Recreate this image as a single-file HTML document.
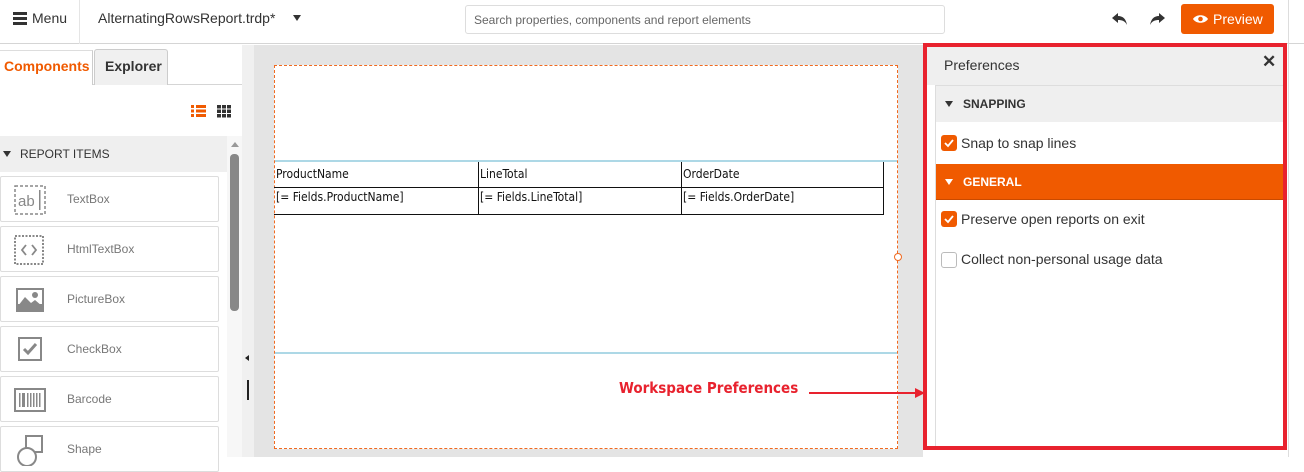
<!DOCTYPE html>
<html><head><style>
*{box-sizing:border-box;margin:0;padding:0}
body{width:1304px;height:457px;overflow:hidden;background:#fff;font-family:"Liberation Sans",sans-serif;position:relative;color:#333}
.a{position:absolute}
.item{position:absolute;left:0;width:219px;height:46px;border:1px solid #ddd;border-radius:2px;background:#fff}
.item span{position:absolute;left:66px;top:15px;font-size:12px;color:#777}
.item svg{position:absolute;left:12px;top:7px}
.cell{position:absolute;font-family:"DejaVu Sans Condensed","Liberation Sans Narrow",sans-serif;font-size:12px;color:#111;padding-left:2px}
.cb{position:absolute;width:16px;height:16px;border-radius:3px;background:#f05a00}
.cb.off{background:#fff;border:1px solid #bbb}
.lbl{position:absolute;font-size:14px;color:#333}
</style></head><body>
<!-- top bar -->
<div class="a" style="left:0;top:0;width:1304px;height:44px;border-bottom:1px solid #d5d5d5;background:#fff"></div>
<div class="a" style="left:13px;top:12px;width:14px;height:3px;background:#333;box-shadow:0 5px 0 #333,0 10px 0 #333"></div>
<div class="a" style="left:32px;top:10px;font-size:14px;color:#333">Menu</div>
<div class="a" style="left:79px;top:0;width:1px;height:44px;background:#e5e5e5"></div>
<div class="a" style="left:98px;top:10px;font-size:14px;color:#333">AlternatingRowsReport.trdp*</div>
<div class="a" style="left:293px;top:15px;width:0;height:0;border-left:4px solid transparent;border-right:4px solid transparent;border-top:6px solid #333"></div>
<div class="a" style="left:465px;top:5px;width:480px;height:29px;border:1px solid #ddd;border-radius:3px;font-size:12px;color:#666;padding:7px 8px">Search properties, components and report elements</div>
<svg class="a" style="left:1112px;top:12px" width="16" height="14" viewBox="0 0 16 14"><path d="M6 1 L0 6 L6 11 V8 C10 8 13 9 15 13 C14 7 11 4 6 4 Z" fill="#333"/></svg>
<svg class="a" style="left:1149px;top:12px" width="16" height="14" viewBox="0 0 16 14"><path d="M10 1 L16 6 L10 11 V8 C6 8 3 9 1 13 C2 7 5 4 10 4 Z" fill="#333"/></svg>
<div class="a" style="left:1181px;top:4px;width:93px;height:30px;background:#f05a00;border-radius:3px;color:#fff;font-size:14px;padding:7px 0 0 32px">Preview</div>
<svg class="a" style="left:1193px;top:14px" width="15" height="10" viewBox="0 0 15 10"><path d="M0 5 C3 0 12 0 15 5 C12 10 3 10 0 5Z" fill="#fff"/><circle cx="7.5" cy="5" r="2.3" fill="#f05a00"/></svg>
<div class="a" style="left:1288px;top:0;width:1px;height:457px;background:#ddd"></div>

<!-- left panel -->
<div class="a" style="left:0;top:84px;width:242px;height:1px;background:#d5d5d5"></div>
<div class="a" style="left:0;top:50px;width:93px;height:35px;background:#fff;border-right:1px solid #ccc;border-top:1px solid #ddd"></div>
<div class="a" style="left:4px;top:58px;font-size:14px;color:#f05a00;font-weight:bold">Components</div>
<div class="a" style="left:94px;top:49px;width:74px;height:36px;background:#f0f0f0;border:1px solid #ccc;border-bottom:none;border-radius:3px 3px 0 0"></div>
<div class="a" style="left:105px;top:58px;font-size:14px;color:#333;font-weight:bold">Explorer</div>
<svg class="a" style="left:191px;top:105px" width="15" height="12"><rect x="0" y="0" width="3" height="3" fill="#f05a00"/><rect x="5" y="0" width="10" height="3" fill="#f05a00"/><rect x="0" y="4.5" width="3" height="3" fill="#f05a00"/><rect x="5" y="4.5" width="10" height="3" fill="#f05a00"/><rect x="0" y="9" width="3" height="3" fill="#f05a00"/><rect x="5" y="9" width="10" height="3" fill="#f05a00"/></svg>
<svg class="a" style="left:217px;top:105px" width="14" height="13"><g fill="#333"><rect x="0" y="0" width="4" height="3.5"/><rect x="5" y="0" width="4" height="3.5"/><rect x="10" y="0" width="4" height="3.5"/><rect x="0" y="4.5" width="4" height="3.5"/><rect x="5" y="4.5" width="4" height="3.5"/><rect x="10" y="4.5" width="4" height="3.5"/><rect x="0" y="9" width="4" height="3.5"/><rect x="5" y="9" width="4" height="3.5"/><rect x="10" y="9" width="4" height="3.5"/></g></svg>
<div class="a" style="left:0;top:136px;width:227px;height:36px;background:#efefef"></div>
<div class="a" style="left:3px;top:151px;width:0;height:0;border-left:4px solid transparent;border-right:4px solid transparent;border-top:6px solid #333"></div>
<div class="a" style="left:20px;top:147px;font-size:12px;color:#333">REPORT ITEMS</div>
<div class="a" style="left:227px;top:136px;width:15px;height:321px;background:#f7f7f7"></div>
<div class="a" style="left:231px;top:142px;width:0;height:0;border-left:4px solid transparent;border-right:4px solid transparent;border-bottom:5px solid #999"></div>
<div class="a" style="left:230px;top:154px;width:9px;height:157px;background:#888;border-radius:4px"></div>

<div class="item" style="top:176px"><svg width="34" height="32"><rect x="2" y="2" width="30" height="28" fill="none" stroke="#888" stroke-width="1.5" stroke-dasharray="3 2"/><text x="5" y="22" font-size="15" fill="#888" font-family="Liberation Sans">ab</text><rect x="26" y="6" width="1.5" height="20" fill="#888"/></svg><span>TextBox</span></div>
<div class="item" style="top:226px"><svg width="34" height="32"><rect x="2" y="2" width="28" height="28" fill="none" stroke="#888" stroke-width="2" stroke-dasharray="2 1.5"/><path d="M13 11 L9 16 L13 21 M19 11 L23 16 L19 21" fill="none" stroke="#888" stroke-width="1.8"/></svg><span>HtmlTextBox</span></div>
<div class="item" style="top:276px"><svg width="34" height="32"><rect x="3" y="4" width="28" height="24" fill="#888"/><rect x="5" y="6" width="24" height="14" fill="#fff"/><path d="M5 22 L12 13 L18 19 L22 16 L29 22 Z" fill="#888"/><circle cx="22" cy="11" r="3" fill="#888"/></svg><span>PictureBox</span></div>
<div class="item" style="top:326px"><svg width="34" height="32"><rect x="6" y="4" width="22" height="22" fill="none" stroke="#888" stroke-width="2"/><path d="M11 15 L15 19 L23 10" fill="none" stroke="#888" stroke-width="3"/></svg><span>CheckBox</span></div>
<div class="item" style="top:376px"><svg width="34" height="32"><rect x="2" y="5" width="30" height="22" fill="none" stroke="#888" stroke-width="2"/><g fill="#888"><rect x="6" y="9" width="1.5" height="14"/><rect x="9" y="9" width="3" height="14"/><rect x="14" y="9" width="1.5" height="14"/><rect x="17" y="9" width="1.5" height="14"/><rect x="20" y="9" width="1.5" height="14"/><rect x="23" y="9" width="1.5" height="14"/><rect x="26" y="9" width="1.5" height="14"/></g></svg><span>Barcode</span></div>
<div class="item" style="top:426px"><svg width="34" height="32"><rect x="13" y="2" width="16" height="16" fill="none" stroke="#888" stroke-width="2"/><circle cx="14" cy="23" r="9" fill="#fff" stroke="#888" stroke-width="2"/></svg><span>Shape</span></div>

<!-- splitter + canvas -->
<div class="a" style="left:242px;top:45px;width:12px;height:412px;background:#f0f0f0"></div>
<div class="a" style="left:245px;top:355px;width:0;height:0;border-top:3px solid transparent;border-bottom:3px solid transparent;border-right:4px solid #222"></div>
<div class="a" style="left:247px;top:380px;width:2px;height:20px;background:#222"></div>
<div class="a" style="left:254px;top:45px;width:669px;height:412px;background:#e4e4e4"></div>
<div class="a" style="left:274px;top:65px;width:624px;height:384px;background:#fff;border:1px dashed #f06a20"></div>
<div class="a" style="left:275px;top:160px;width:622px;height:2px;background:#add8e6"></div>
<div class="a" style="left:275px;top:352px;width:622px;height:2px;background:#add8e6"></div>
<div class="a" style="left:894px;top:253px;width:8px;height:8px;border:1px solid #f06a20;border-radius:50%;background:#fff"></div>
<!-- table -->
<div class="a" style="left:274px;top:162px;width:610px;height:53px;border-right:1px solid #111;border-bottom:1px solid #111"></div>
<div class="a" style="left:274px;top:187px;width:610px;height:1px;background:#111"></div>
<div class="a" style="left:478px;top:162px;width:1px;height:52px;background:#111"></div>
<div class="a" style="left:681px;top:162px;width:1px;height:52px;background:#111"></div>
<div class="cell" style="left:274px;top:167px">ProductName</div>
<div class="cell" style="left:478px;top:167px">LineTotal</div>
<div class="cell" style="left:681px;top:167px">OrderDate</div>
<div class="cell" style="left:274px;top:190px">[= Fields.ProductName]</div>
<div class="cell" style="left:478px;top:190px">[= Fields.LineTotal]</div>
<div class="cell" style="left:681px;top:190px">[= Fields.OrderDate]</div>
<div class="a" style="left:619px;top:379px;font-size:15px;font-weight:bold;color:#e8222e;font-family:'DejaVu Sans Condensed','Liberation Sans',sans-serif">Workspace Preferences</div>
<div class="a" style="left:809px;top:392px;width:110px;height:2px;background:#e8222e"></div>
<div class="a" style="left:915px;top:388px;width:0;height:0;border-top:5px solid transparent;border-bottom:5px solid transparent;border-left:10px solid #e8222e"></div>

<!-- preferences -->
<div class="a" style="left:923px;top:43px;width:364px;height:407px;border:4px solid #e8222e;background:#fff"></div>
<div class="a" style="left:927px;top:47px;width:356px;height:38px;background:#efefef"></div>
<div class="a" style="left:944px;top:57px;font-size:14px;color:#333">Preferences</div>
<div class="a" style="left:1262px;top:52px;font-size:17px;font-weight:bold;color:#333">✕</div>
<div class="a" style="left:935px;top:85px;width:348px;height:1px;background:#ddd"></div>
<div class="a" style="left:935px;top:86px;width:1px;height:360px;background:#ddd"></div>
<div class="a" style="left:936px;top:86px;width:347px;height:36px;background:#efefef"></div>
<div class="a" style="left:945px;top:101px;width:0;height:0;border-left:4px solid transparent;border-right:4px solid transparent;border-top:6px solid #333"></div>
<div class="a" style="left:963px;top:97px;font-size:12px;font-weight:bold;color:#333">SNAPPING</div>
<div class="cb" style="left:941px;top:135px"></div>
<svg class="a" style="left:941px;top:135px" width="16" height="16"><path d="M4 8 L7 11 L12 5" fill="none" stroke="#fff" stroke-width="1.8"/></svg>
<div class="lbl" style="left:961px;top:135px">Snap to snap lines</div>
<div class="a" style="left:936px;top:164px;width:347px;height:36px;background:#f05a00;border-bottom:1px solid #c94a00"></div>
<div class="a" style="left:945px;top:179px;width:0;height:0;border-left:4px solid transparent;border-right:4px solid transparent;border-top:6px solid #fff"></div>
<div class="a" style="left:963px;top:175px;font-size:12px;font-weight:bold;color:#fff">GENERAL</div>
<div class="cb" style="left:941px;top:211px"></div>
<svg class="a" style="left:941px;top:211px" width="16" height="16"><path d="M4 8 L7 11 L12 5" fill="none" stroke="#fff" stroke-width="1.8"/></svg>
<div class="lbl" style="left:961px;top:211px">Preserve open reports on exit</div>
<div class="cb off" style="left:941px;top:252px"></div>
<div class="lbl" style="left:961px;top:251px">Collect non-personal usage data</div>
</body></html>
